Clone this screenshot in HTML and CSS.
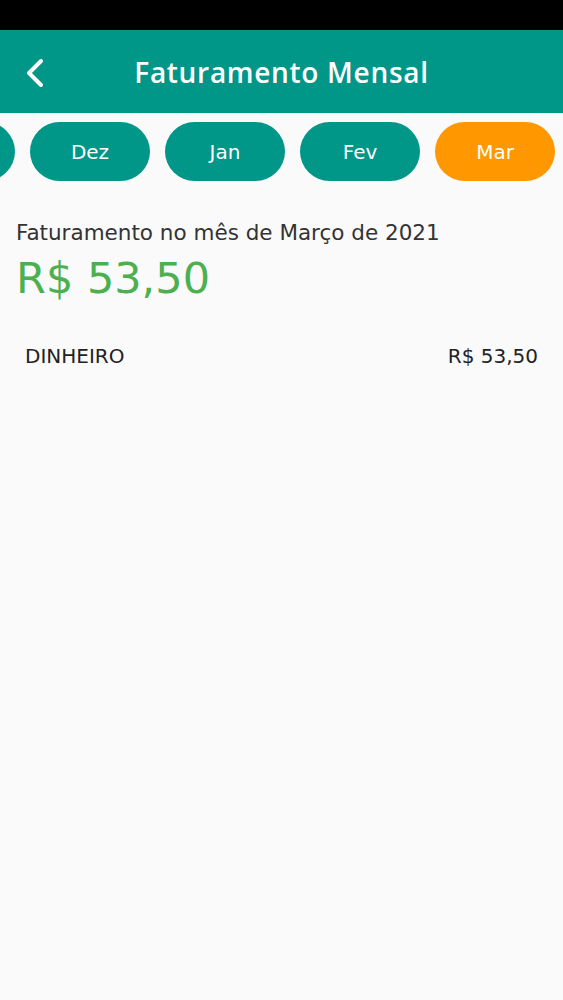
FILE: index.html
```html
<!DOCTYPE html>
<html lang="pt-BR">
<head>
<meta charset="utf-8">
<title>Faturamento Mensal</title>
<link rel="stylesheet" href="styles.css">
</head>
<body>
<div class="statusbar"></div>
<header class="appbar">
  <button class="back" aria-label="Voltar">
    <svg width="20" height="30" viewBox="0 0 20 30"><path d="M16 3 L4 15 L16 27" fill="none" stroke="#fff" stroke-width="4" stroke-linecap="round" stroke-linejoin="round"/></svg>
  </button>
  <h1 class="title">Faturamento Mensal</h1>
</header>
<nav class="months">
  <div class="months-track">
    <span class="pill" aria-label="Nov"></span>
    <span class="pill">Dez</span>
    <span class="pill">Jan</span>
    <span class="pill">Fev</span>
    <span class="pill active">Mar</span>
  </div>
</nav>
<section class="summary">
  <p class="label">Faturamento no mês de Março de 2021</p>
  <p class="total">R$ 53,50</p>
</section>
<ul class="list">
  <li class="row"><span>DINHEIRO</span><span>R$ 53,50</span></li>
</ul>
</body>
</html>
```
FILE: styles.css
```css
* { box-sizing: border-box; }
html, body { margin: 0; padding: 0; }
body {
  width: 563px;
  height: 1000px;
  background: #fafafa;
  font-family: "DejaVu Sans", "Open Sans", sans-serif;
  overflow: hidden;
}
.statusbar { height: 30px; background: #000; }
.appbar {
  height: 83px;
  background: #009688;
  display: flex;
  align-items: center;
  justify-content: center;
  position: relative;
}
.back {
  position: absolute;
  left: 20px;
  top: 27px;
  background: none;
  border: 0;
  padding: 0;
  width: 30px;
  height: 32px;
  display: flex;
  align-items: center;
  justify-content: center;
}
.title {
  margin: 0;
  color: #fff;
  font-family: "Open Sans", "DejaVu Sans", sans-serif;
  font-size: 28px;
  font-weight: 600;
  letter-spacing: 0.7px;
}
.months {
  overflow: hidden;
  padding: 9px 0;
}
.months-track {
  display: flex;
  gap: 15px;
  margin-left: -105px;
}
.pill {
  flex: 0 0 120px;
  height: 59px;
  border-radius: 30px;
  background: #009688;
  color: #fff;
  font-size: 20px;
  display: flex;
  align-items: center;
  justify-content: center;
}
.pill.active { background: #ff9800; }
.summary { padding: 28px 16px 0; }
.label {
  margin: 0;
  font-size: 21.5px;
  color: #333;
  line-height: 30px;
}
.total {
  margin: 4px 0 0;
  font-size: 43px;
  color: #4caf50;
  line-height: 52px;
}
.list { list-style: none; margin: 0; padding: 40px 25px 0; }
.row {
  display: flex;
  justify-content: space-between;
  font-size: 20px;
  color: #222;
}
```
